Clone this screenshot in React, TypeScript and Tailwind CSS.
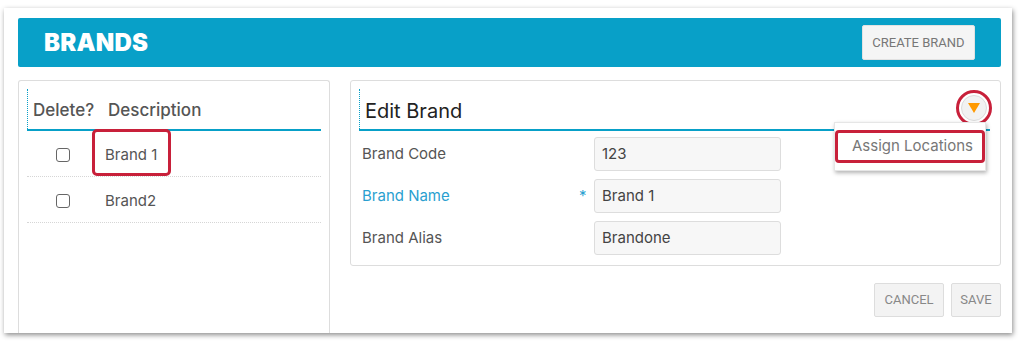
const font = { fontFamily: 'Inter, "Noto Sans", sans-serif' };

interface Brand {
  id: number;
  description: string;
  highlighted?: boolean;
}

const brands: Brand[] = [
  { id: 1, description: 'Brand 1', highlighted: true },
  { id: 2, description: 'Brand2' },
];

const fields = [
  { label: 'Brand Code', value: '123' },
  { label: 'Brand Name', value: 'Brand 1', required: true },
  { label: 'Brand Alias', value: 'Brandone' },
];

export default function App() {
  return (
    <div className="w-[1022px] h-[343px] bg-white pt-[8px] pl-[4px] overflow-hidden" style={font}>
      <div className="w-[1008px] h-[325px] bg-white shadow-[1px_2px_5px_rgba(0,0,0,0.45)] pt-[10px] pl-[14px] pr-[11px] overflow-hidden flex flex-col">
        {/* Header bar */}
        <div className="h-[49px] bg-[#08a0c8] rounded-[2px] flex items-center justify-between pl-[26px] pr-[26px] shrink-0">
          <h1 className="text-[24px] font-black text-white tracking-[0.2px]">BRANDS</h1>
          <button
            className="h-[35px] w-[113px] bg-[#f5f5f5] border border-[#e2e2e2] rounded-[2px] text-[13px] text-[#777]"
            style={{ fontFamily: 'Roboto, sans-serif' }}
          >
            CREATE BRAND
          </button>
        </div>

        <div className="flex gap-[20px] mt-[13px] flex-1">
          {/* Brand list */}
          <div className="w-[312px] border border-[#ddd] border-b-0 rounded-t-[3px] pt-[8px] px-[8px] shrink-0 h-[280px]">
            <div className="h-[42px] border-b-2 border-[#08a0c8]">
              <div className="h-full border-l border-dotted border-[#08a0c8] flex items-center pt-[3px] pl-[5px] text-[17px] font-medium text-[#555]">
                <span className="w-[75px]">Delete?</span>
                <span>Description</span>
              </div>
            </div>
            {brands.map((b) => (
              <div key={b.id} className="h-[46px] pt-[3px] border-b border-dotted border-[#d6d6d6] flex items-center">
                <div className="w-[72px] flex justify-center">
                  <div className="w-[14px] h-[14px] border-[1.5px] border-[#666] rounded-[3px] bg-white"></div>
                </div>
                <div className="relative ml-[6px] text-[15px] text-[#555]">
                  {b.highlighted && (
                    <div className="absolute left-[-13px] top-[-15px] w-[79px] h-[47px] border-[3px] border-[#c8203a] rounded-[5px]"></div>
                  )}
                  {b.description}
                </div>
              </div>
            ))}
          </div>

          {/* Edit brand */}
          <div className="flex-1 flex flex-col">
            <div className="h-[186px] border border-[#ddd] rounded-[3px] pt-[8px] pl-[8px] pr-[10px] relative">
              <div className="h-[42px] border-b-2 border-[#08a0c8]">
                <div className="h-full border-l border-dotted border-[#08a0c8] flex items-center justify-between pt-[3px] pl-[5px]">
                  <h2 className="text-[20px] text-[#222]">Edit Brand</h2>
                  <div className="w-[36px] h-[36px] rounded-full border-[3px] border-[#c8203a] flex items-center justify-center mr-[-2px] mt-[-5px]">
                    <div className="w-[26px] h-[26px] rounded-full bg-[#f2f2f2] border border-[#dcdcdc] flex items-center justify-center">
                      <svg width="12" height="10" viewBox="0 0 12 10">
                        <path d="M0 0 L12 0 L6 10 Z" fill="#ff9900" />
                      </svg>
                    </div>
                  </div>
                </div>
              </div>

              {/* Dropdown menu */}
              <div className="absolute left-[483px] top-[41px] w-[152px] h-[49px] bg-white border border-[#e6e6e6] shadow-[1px_2px_4px_rgba(0,0,0,0.3)] pt-[7px]">
                <div className="h-[33px] border-[3px] border-[#c8203a] rounded-[4px] flex items-center pl-[14px] text-[15px] text-[#777]">
                  Assign Locations
                </div>
              </div>

              <div className="flex flex-col gap-[8px] mt-[6px] pl-[3px]">
                {fields.map((f) => (
                  <div key={f.label} className="flex items-center">
                    <span className={`w-[217px] text-[15px] ${f.required ? 'text-[#2a9fd0]' : 'text-[#555]'}`}>
                      {f.label}
                    </span>
                    <span className="w-[15px] text-[#2a9fd0] text-[15px]">{f.required ? '*' : ''}</span>
                    <div className="w-[187px] h-[34px] bg-[#f7f7f7] border border-[#ddd] rounded-[3px] flex items-center pl-[7px] text-[15px] text-[#444]">
                      {f.value}
                    </div>
                  </div>
                ))}
              </div>
            </div>

            <div className="flex justify-end gap-[7px] mt-[17px]" style={{ fontFamily: 'Roboto, sans-serif' }}>
              <button className="w-[70px] h-[34px] bg-[#f3f3f3] border border-[#ddd] rounded-[2px] text-[13px] text-[#888]">
                CANCEL
              </button>
              <button className="w-[50px] h-[34px] bg-[#f3f3f3] border border-[#ddd] rounded-[2px] text-[13px] text-[#888]">
                SAVE
              </button>
            </div>
          </div>
        </div>
      </div>
    </div>
  );
}
